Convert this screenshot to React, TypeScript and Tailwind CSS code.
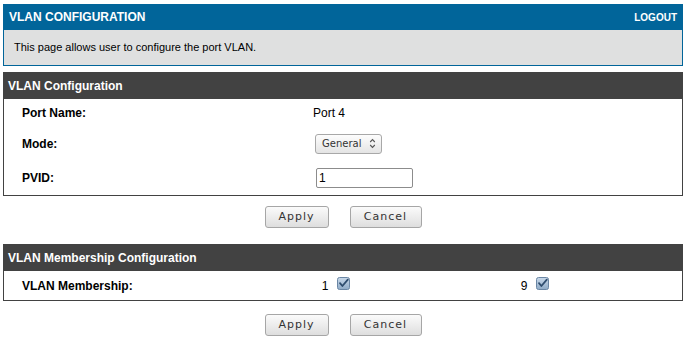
import React from 'react';

const Check: React.FC = () => (
  <svg width="13" height="13" viewBox="0 0 13 13" className="inline-block">
    <defs>
      <linearGradient id="cb" x1="0" y1="0" x2="0" y2="1">
        <stop offset="0" stopColor="#c9d9ea" />
        <stop offset="1" stopColor="#8eaac6" />
      </linearGradient>
    </defs>
    <rect x="0.5" y="0.5" width="12" height="12" rx="2" fill="url(#cb)" stroke="#6a86a4" />
    <path d="M3 6.2 L5.4 9 L10.8 2.6" fill="none" stroke="#2f4d6e" strokeWidth="1.8" strokeLinecap="round" strokeLinejoin="round" />
  </svg>
);

const Btn: React.FC<{ label: string; w: string }> = ({ label, w }) => (
  <button
    className={`${w} h-[22px] rounded-[3px] border border-[#a6a6a6] bg-gradient-to-b from-[#fbfbfb] to-[#dedede] text-[11px] tracking-[1px] text-[#333] font-['DejaVu_Sans',sans-serif]`}
  >
    {label}
  </button>
);

const SectionHead: React.FC<{ title: string }> = ({ title }) => (
  <div className="h-[27px] bg-[#424242] flex items-center px-[5px] text-white font-bold text-[12px]">{title}</div>
);

const App: React.FC = () => {
  return (
    <div className="w-[686px] h-[346px] bg-white px-[3px] pt-[4px] font-['Liberation_Sans',Arial,sans-serif] text-black">
      {/* top bar */}
      <div className="h-[26px] bg-[#01659a] flex items-center justify-between pl-[6px] pr-[6px] text-white font-bold">
        <span className="text-[12px]">VLAN CONFIGURATION</span>
        <span className="text-[10px]">LOGOUT</span>
      </div>
      <div className="h-[36px] bg-[#dfe0e0] border-x border-b border-[#01659a] flex items-center pl-[10px] text-[11px]">
        This page allows user to configure the port VLAN.
      </div>

      {/* VLAN Configuration */}
      <div className="mt-[6px]">
        <SectionHead title="VLAN Configuration" />
        <div className="border-x border-b border-[#424242] text-[12px]">
          <div className="h-[28px] flex items-center">
            <div className="w-[309px] pl-[18px] font-bold">Port Name:</div>
            <div>Port 4</div>
          </div>
          <div className="h-[33px] flex items-center">
            <div className="w-[309px] pl-[18px] font-bold">Mode:</div>
            <div className="ml-[2px] w-[67px] h-[20px] rounded-[3px] border border-[#a8a8a8] bg-gradient-to-b from-[#fdfdfd] to-[#e4e4e4] flex items-center justify-between pl-[6px] pr-[5px] font-['DejaVu_Sans',sans-serif] text-[10px] text-[#333]">
              <span>General</span>
              <svg width="7" height="11" viewBox="0 0 7 11">
                <path d="M1.2 4 L3.5 1.6 L5.8 4" fill="none" stroke="#555" strokeWidth="1.1" />
                <path d="M1.2 7 L3.5 9.4 L5.8 7" fill="none" stroke="#555" strokeWidth="1.1" />
              </svg>
            </div>
          </div>
          <div className="h-[35px] flex items-center">
            <div className="w-[309px] pl-[18px] font-bold">PVID:</div>
            <div className="ml-[3px] w-[97px] h-[20px] rounded-[2px] border border-[#8c8c8c] bg-white flex items-center pl-[2px] text-[12px]">1</div>
          </div>
        </div>
      </div>
      <div className="flex justify-center gap-[21px] mt-[10px]">
        <Btn label="Apply" w="w-[64px]" />
        <Btn label="Cancel" w="w-[72px]" />
      </div>

      {/* VLAN Membership */}
      <div className="mt-[16px]">
        <SectionHead title="VLAN Membership Configuration" />
        <div className="h-[30px] border-x border-b border-[#424242] flex items-center text-[12px]">
          <div className="w-[280px] pl-[18px] font-bold">VLAN Membership:</div>
          <div className="w-[104px] flex justify-center items-baseline gap-[9px]">
            <span>1</span>
            <span className="relative top-[-3px]"><Check /></span>
          </div>
          <div className="flex-1 flex justify-center items-baseline gap-[9px]">
            <span>9</span>
            <span className="relative top-[-3px]"><Check /></span>
          </div>
        </div>
      </div>
      <div className="flex justify-center gap-[21px] mt-[13px]">
        <Btn label="Apply" w="w-[64px]" />
        <Btn label="Cancel" w="w-[72px]" />
      </div>
    </div>
  );
};

export default App;
